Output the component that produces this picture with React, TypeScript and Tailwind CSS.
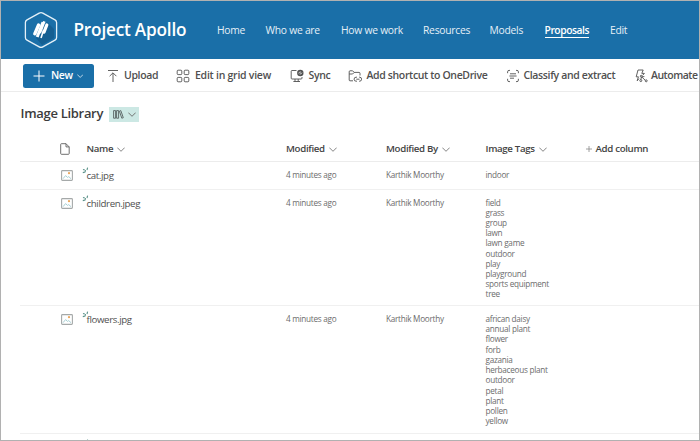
import type { ReactNode } from 'react'

type NavItem = { label: string; cls: string; active?: boolean }

const nav: NavItem[] = [
  { label: 'Home', cls: 'w-[48.5px]' },
  { label: 'Who we are', cls: 'w-[75.5px]' },
  { label: 'How we work', cls: 'w-[82px]' },
  { label: 'Resources', cls: 'w-[66.5px]' },
  { label: 'Models', cls: 'w-[55px]' },
  { label: 'Proposals', cls: 'w-[65.5px]', active: true },
  { label: 'Edit', cls: 'w-[30px]' },
]

function Logo() {
  return (
    <svg className="h-[38px] w-[34px] shrink-0" viewBox="0 0 34 38" fill="none">
      <path d="M23 11 L30 18 V27 L18 34 L12 27Z" fill="#155f92" />
      <path d="M15.2 2.1 Q17 1.1 18.8 2.1 L31 8.9 Q32.6 9.8 32.6 11.6 V26.4 Q32.6 28.2 31 29.1 L18.8 35.9 Q17 36.9 15.2 35.9 L3 29.1 Q1.4 28.2 1.4 26.4 V11.6 Q1.4 9.8 3 8.9Z" stroke="#e4f0f8" strokeWidth="1.3" />
      <path d="M14.6 14 L10.8 22.8" stroke="#fff" strokeWidth="3.4" strokeLinecap="round" />
      <path d="M19 11.2 L13.2 26" stroke="#fff" strokeWidth="3" />
      <path d="M20.3 10.4 L15.8 22" stroke="#fff" strokeWidth="2.6" />
      <path d="M22.8 14 L20 21.2" stroke="#fff" strokeWidth="3.2" strokeLinecap="round" />
      <path d="M19.6 19 L17 27" stroke="#fff" strokeWidth="1.6" />
    </svg>
  )
}

function Chevron({ className }: { className: string }) {
  return (
    <svg className={`shrink-0 ${className}`} viewBox="0 0 8 5" fill="none" stroke="currentColor" strokeWidth="0.9">
      <path d="M0.3 0.6 L4 4.3 L7.7 0.6" />
    </svg>
  )
}

function ToolIcon({ children }: { children: ReactNode }) {
  return (
    <svg className="h-[14px] w-[14px] shrink-0" viewBox="0 0 14 14" fill="none" stroke="#505050" strokeWidth="0.9" strokeLinejoin="round">
      {children}
    </svg>
  )
}

function Tool({ label, icon, cls }: { label: string; icon: ReactNode; cls: string }) {
  return (
    <div className={`flex shrink-0 items-center whitespace-nowrap ${cls}`}>
      {icon}
      <span>{label}</span>
    </div>
  )
}

function Toolbar() {
  return (
    <div className="flex h-[33px] shrink-0 items-center overflow-hidden border-b border-[#ececec] pl-[22px] pt-px text-[10.5px] font-semibold tracking-[-0.36px] text-[#505050]">
      <div className="flex h-6 w-[71px] shrink-0 items-center rounded-[2.5px] bg-[#1a6fa8] pl-[10px] text-white">
        <svg className="h-[12px] w-[12px]" viewBox="0 0 12 12" stroke="white" strokeWidth="1">
          <path d="M6 0.5 V11.5 M0.5 6 H11.5" />
        </svg>
        <span className="ml-[6px] w-[25.5px]">New</span>
        <Chevron className="h-[4px] w-[6.4px]" />
      </div>
      <Tool
        label="Upload"
        cls="ml-[11.5px] w-[70.5px] gap-[4.5px]"
        icon={
          <ToolIcon>
            <path d="M2 1.5 H12 M7 13 V4 M3.6 7.2 L7 3.8 L10.4 7.2" />
          </ToolIcon>
        }
      />
      <Tool
        label="Edit in grid view"
        cls="w-[113.5px] gap-[5px] tracking-[-0.25px]"
        icon={
          <ToolIcon>
            <rect x="1.2" y="1.2" width="4.6" height="4.4" rx="0.9" />
            <rect x="8.2" y="1.2" width="4.6" height="4.4" rx="0.9" />
            <rect x="1.2" y="8.4" width="4.6" height="4.4" rx="0.9" />
            <rect x="8.2" y="8.4" width="4.6" height="4.4" rx="0.9" />
          </ToolIcon>
        }
      />
      <Tool
        label="Sync"
        cls="w-[58px] gap-[5px]"
        icon={
          <ToolIcon>
            <path d="M6.5 1.5 H2 Q1.2 1.5 1.2 2.3 V9.2 Q1.2 10 2 10 H11 Q12 10 12 9.2 V8" />
            <path d="M5 10 V12.4 M8.2 10 V12.4 M3.4 12.5 H10" />
            <circle cx="10.3" cy="4" r="3.2" fill="#505050" stroke="none" />
            <path d="M8.6 4.4 Q9.1 2.6 11.1 3 M12 3.6 Q11.5 5.4 9.5 5" stroke="white" strokeWidth="0.7" />
          </ToolIcon>
        }
      />
      <Tool
        label="Add shortcut to OneDrive"
        cls="w-[158px] gap-[5px]"
        icon={
          <ToolIcon>
            <path d="M5 11.8 H2 Q1.2 11.8 1.2 11 V2.8 Q1.2 1.8 2 1.8 H4.6 L6.2 3.4 H11 Q12 3.4 12 4.4 V6.5 M1.2 5 H4.6 L6.2 3.4" />
            <path d="M9 12.2 H8.1 A2 2 0 0 1 8.1 8.2 H9 M11 8.2 H11.6 A2 2 0 0 1 11.6 12.2 H11 M8.3 10.2 H11.5" />
          </ToolIcon>
        }
      />
      <Tool
        label="Classify and extract"
        cls="w-[128px] gap-[4px]"
        icon={
          <ToolIcon>
            <path d="M4 1.4 H3 Q1.6 1.4 1.6 2.8 V4.2 M10 1.4 H11 Q12.4 1.4 12.4 2.8 V4.2 M4 12.6 H3 Q1.6 12.6 1.6 11.2 V9.8 M10 12.6 H11 Q12.4 12.6 12.4 11.2 V9.8" />
            <path d="M4 4.8 H10 M3.4 7 H10.6 M4 9.2 H8" />
          </ToolIcon>
        }
      />
      <Tool
        label="Automate"
        cls="gap-[3.5px] tracking-[-0.5px]"
        icon={
          <ToolIcon>
            <path d="M5 9.6 L3.2 11.8 L4.4 7.8 H2.2 L4 1 H9.2 L7.8 4.4 H10.4 L8.6 6.4" />
            <path d="M7.2 7.4 L11.6 11.6 M6.6 11.2 L7.6 7.8 L10.4 7.6" />
            <circle cx="7.2" cy="7.2" r="0.9" fill="white" />
            <circle cx="12.2" cy="11.8" r="1" fill="white" />
            <circle cx="6.8" cy="11.6" r="1" fill="white" />
          </ToolIcon>
        }
      />
    </div>
  )
}

function FileIcon() {
  return (
    <svg className="h-[12px] w-[10px]" viewBox="0 0 10 12" fill="none" stroke="#606060" strokeWidth="0.9" strokeLinejoin="round">
      <path d="M1.4 0.7 H6 L9.2 3.9 V10.5 Q9.2 11.3 8.4 11.3 H1.4 Q0.7 11.3 0.7 10.5 V1.4 Q0.7 0.7 1.4 0.7 M6 0.7 V3.9 H9.2" />
    </svg>
  )
}

function PictureIcon() {
  return (
    <svg className="h-[11px] w-[12px]" viewBox="0 0 12 11" fill="none">
      <rect x="0.6" y="0.6" width="10.8" height="9.8" rx="0.8" stroke="#a5a9a9" strokeWidth="1.1" />
      <path d="M2 8.7 L4.6 5.6 L6.5 7.4 L7.7 6.6 L10 8.7" stroke="#9cc9cf" strokeWidth="0.9" />
      <circle cx="8" cy="3.2" r="1.1" fill="#eaa65a" />
    </svg>
  )
}

function NewMark() {
  return (
    <svg className="absolute -left-[5px] -top-[1px] h-[7px] w-[7px]" viewBox="0 0 7 7" stroke="#5b9289" strokeWidth="1.1">
      <path d="M1 2.4 L2.8 3 M5.6 0.6 L5 3 M0.8 5.6 L3 5 L3.6 3.2" fill="none" />
    </svg>
  )
}

const files = [
  { name: 'cat.jpg', height: 'h-[27.5px]', tags: ['indoor'] },
  {
    name: 'children.jpeg',
    height: 'h-[116.5px]',
    tags: ['field', 'grass', 'group', 'lawn', 'lawn game', 'outdoor', 'play', 'playground', 'sports equipment', 'tree'],
  },
  {
    name: 'flowers.jpg',
    height: 'h-[127.5px]',
    tags: ['african daisy', 'annual plant', 'flower', 'forb', 'gazania', 'herbaceous plant', 'outdoor', 'petal', 'plant', 'pollen', 'yellow'],
  },
]

const columns = 'grid grid-cols-[66.5px_199.5px_100px_99.5px_100px_1fr]'

function Header({ label }: { label: string }) {
  return (
    <div className="flex items-center gap-[4px]">
      <span>{label}</span>
      <Chevron className="h-[5px] w-[8px] text-[#777]" />
    </div>
  )
}

export default function App() {
  return (
    <div className="flex h-[441px] w-[700px] flex-col overflow-hidden border border-[#b1b1b1] bg-white font-['Open_Sans','Noto_Sans',sans-serif]">
      <header className="flex h-[58px] shrink-0 items-center bg-[#1a6fa8] pl-[23px] text-white">
        <Logo />
        <h1 className="ml-[15.5px] w-[143.5px] whitespace-nowrap text-[17.2px] font-semibold leading-6 tracking-[-0.2px]">Project Apollo</h1>
        <nav className="flex text-[10.3px] leading-[14px] tracking-[-0.25px] text-[#e6f0f7]">
          {nav.map((item) => (
            <a key={item.label} className={`whitespace-nowrap ${item.cls}`}>
              <span className={item.active ? 'inline-block border-b border-white font-semibold tracking-[-0.45px] text-white' : 'inline-block'}>{item.label}</span>
            </a>
          ))}
        </nav>
      </header>
      <Toolbar />
      <div className="flex h-[44px] shrink-0 items-center pl-[19.5px]">
        <h2 className="w-[88.5px] whitespace-nowrap text-[13px] font-semibold tracking-[-0.3px] text-[#3c3c3c]">Image Library</h2>
        <div className="flex h-[15px] w-[30px] items-center gap-[4px] bg-[#cce8e4] pl-[4px] text-[#666]">
          <svg className="h-[9px] w-[11px]" viewBox="0 0 11 9" fill="none" stroke="#555f5f" strokeWidth="0.9">
            <path d="M0.6 0.6 H2.6 V8.2 H0.6Z M3.6 0.6 H5.6 V8.2 H3.6Z M6.4 1.2 L7.8 0.6 L10.3 7.7 L8.8 8.2Z" />
          </svg>
          <Chevron className="h-[5px] w-[8px]" />
        </div>
      </div>
      <main className="ml-[19px] shrink-0">
        <div className={`h-[26px] border-b border-[#ececec] pt-px text-[9.7px] font-semibold tracking-[-0.33px] text-[#444] ${columns}`}>
          <div className="flex items-center pb-px pl-[40px]">
            <FileIcon />
          </div>
          <Header label="Name" />
          <Header label="Modified" />
          <Header label="Modified By" />
          <Header label="Image Tags" />
          <div className="flex items-center gap-[4px]">
            <svg className="h-[6px] w-[6px]" viewBox="0 0 6 6" stroke="#888" strokeWidth="0.8">
              <path d="M3 0 V6 M0 3 H6" />
            </svg>
            <span>Add column</span>
          </div>
        </div>
        {files.map((file) => (
          <div key={file.name} className={`border-b border-[#f0f0f0] text-[8.2px] leading-[10.22px] tracking-[-0.28px] text-[#6c6c6c] ${file.height} ${columns}`}>
            <div className="pl-[41px] pt-[8px]">
              <PictureIcon />
            </div>
            <div className="pt-[6px] text-[9.7px] leading-[15px] tracking-[-0.37px] text-[#505050]">
              <span className="relative inline-block">
                <NewMark />
                {file.name}
              </span>
            </div>
            <div className="pt-[8px]">4 minutes ago</div>
            <div className="pt-[8px]">Karthik Moorthy</div>
            <ul className="pt-[8px]">
              {file.tags.map((tag) => (
                <li key={tag} className="whitespace-nowrap">
                  {tag}
                </li>
              ))}
            </ul>
          </div>
        ))}
        <div className={columns}>
          <span />
          <span className="relative mt-[6px] h-2">
            <NewMark />
          </span>
        </div>
      </main>
    </div>
  )
}
